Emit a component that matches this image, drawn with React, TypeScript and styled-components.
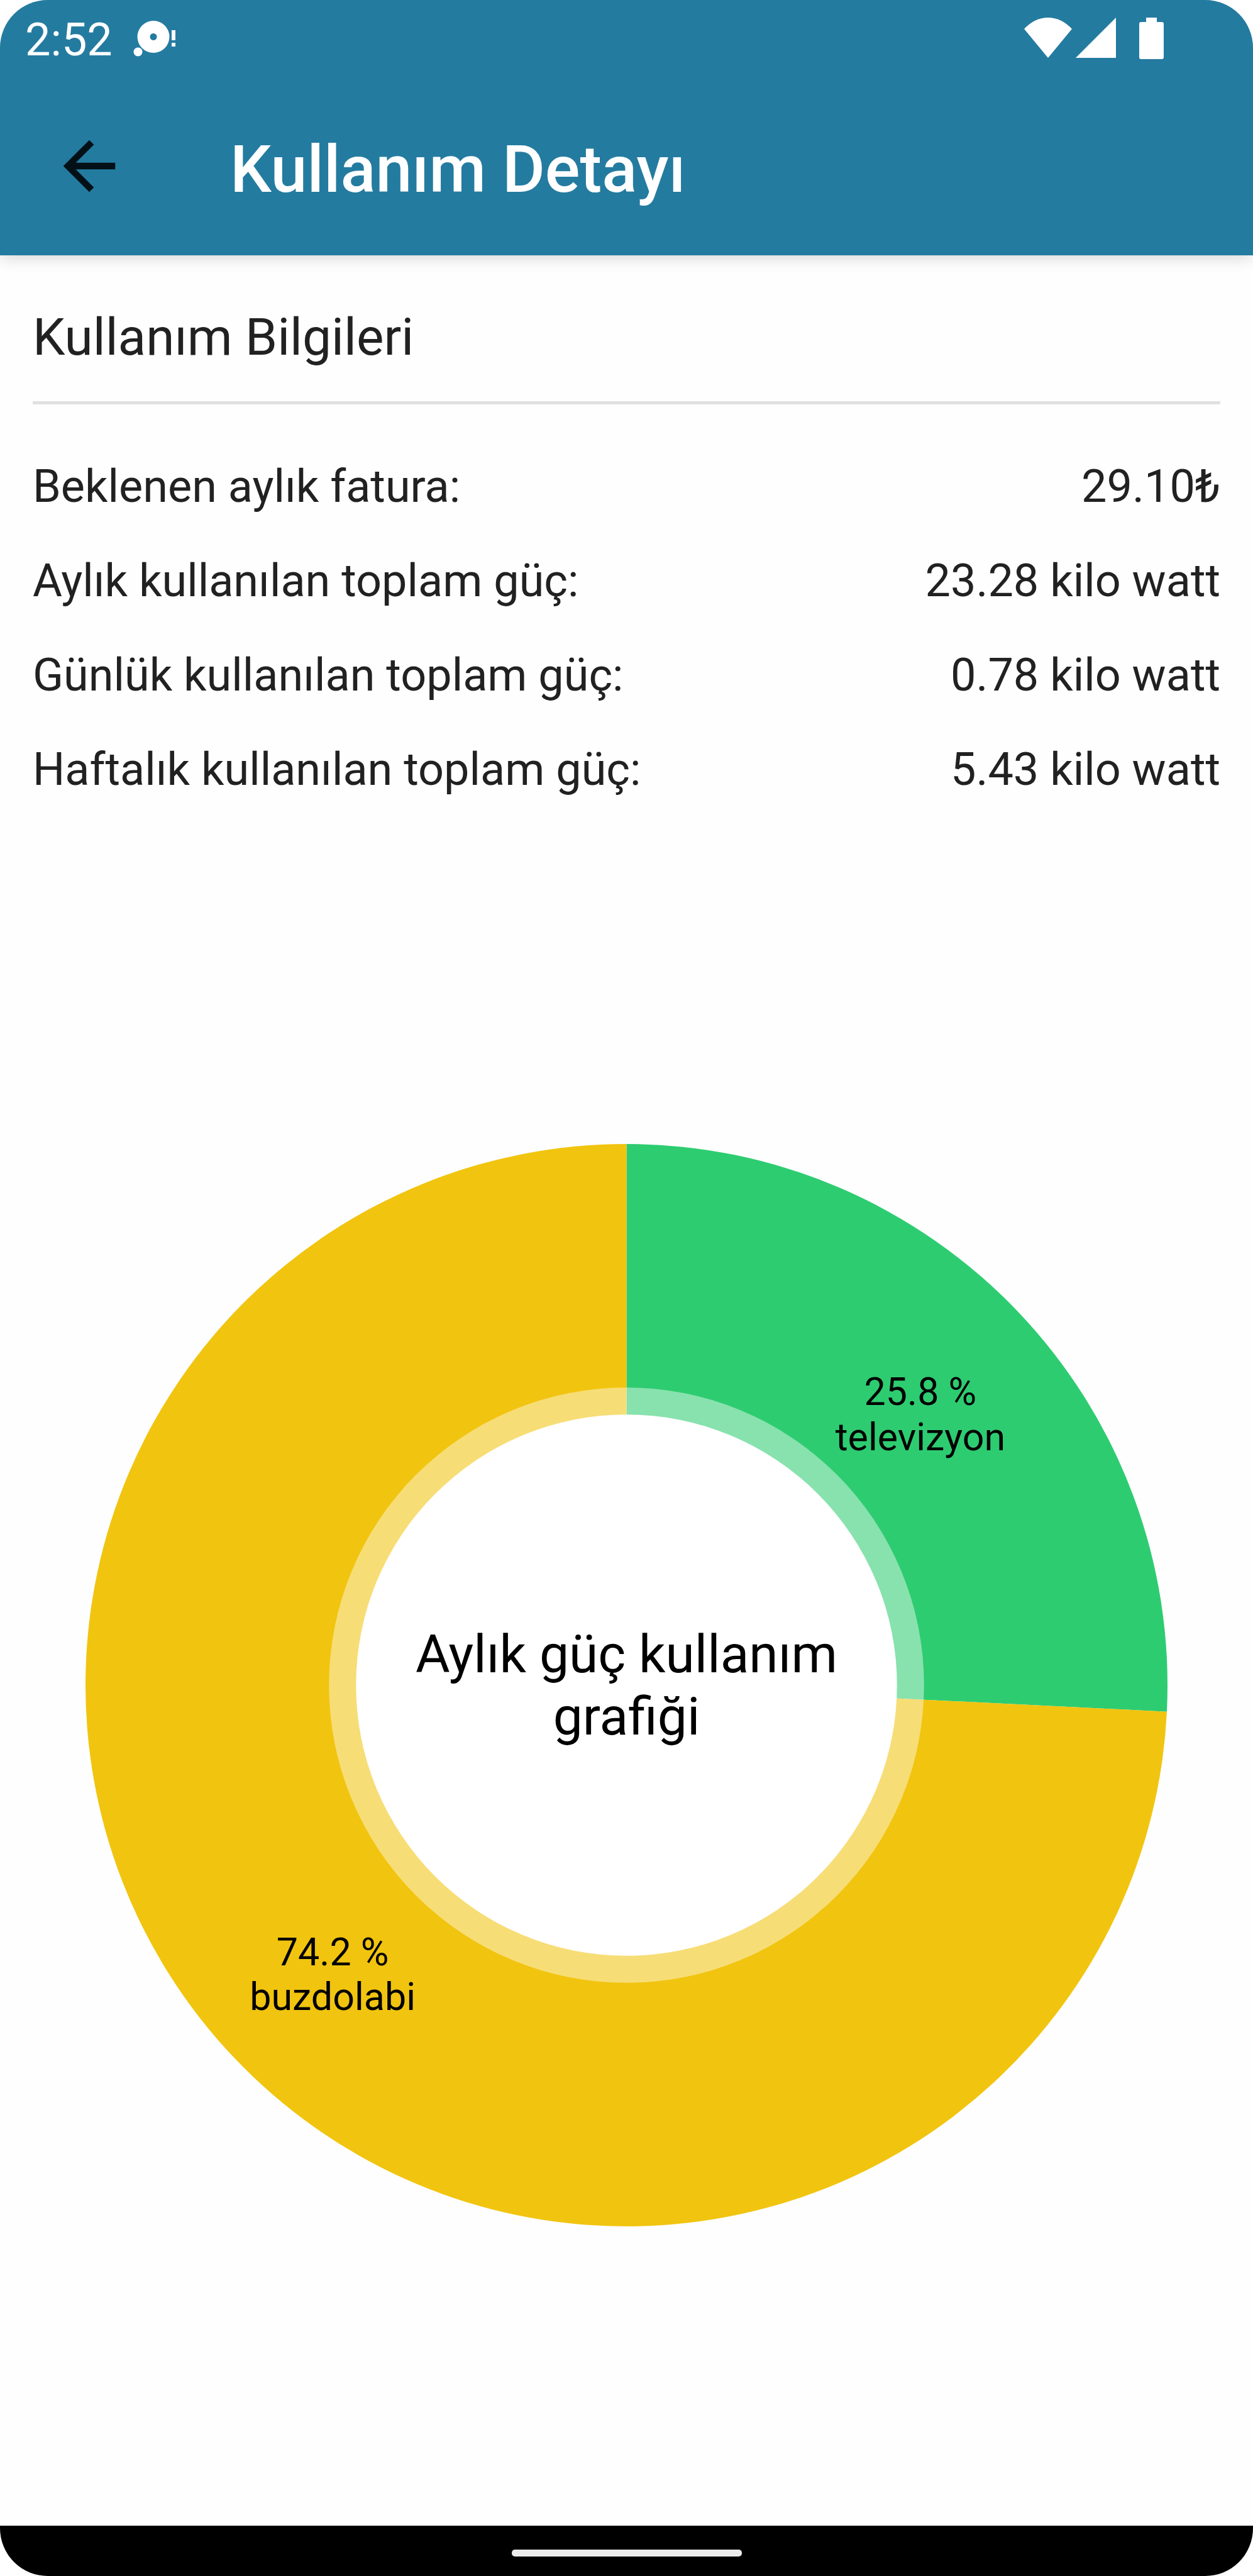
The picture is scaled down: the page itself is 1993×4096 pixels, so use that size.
import React from 'react';
import styled, { createGlobalStyle } from 'styled-components';

const GlobalStyle = createGlobalStyle`
  *, *::before, *::after { box-sizing: border-box; }
  body { margin: 0; background: #ffffff; }
`;

const Screen = styled.div`
  display: flex;
  flex-direction: column;
  min-height: 100vh;
  overflow: hidden;
  border-radius: 76px;
  background: #fefefe;
  color: #212121;
  font-family: Roboto, "Noto Sans", sans-serif;
`;

const TopArea = styled.header`
  background: #247ba0;
  color: #ffffff;
  box-shadow: 0 4px 24px rgba(0, 0, 0, 0.16);
`;

const StatusBar = styled.div`
  display: flex;
  align-items: center;
  justify-content: space-between;
  height: 128px;
  padding: 0 140px 0 40px;
`;

const StatusGroup = styled.div`
  display: flex;
  align-items: center;
`;

const Clock = styled.time`
  font-size: 72px;
  line-height: 84px;
`;

const NoticeIcon = styled.svg`
  display: block;
  width: 72px;
  height: 64px;
  margin-left: 32px;
`;

const SystemIcons = styled.svg`
  display: block;
  width: 224px;
  height: 72px;
`;

const Toolbar = styled.div`
  display: flex;
  align-items: center;
  height: 278px;
  padding: 0 80px 6px;
`;

const BackButton = styled.button`
  display: block;
  width: 124px;
  height: 124px;
  padding: 0;
  border: 0;
  background: none;
  color: #031017;
  cursor: pointer;

  svg {
    display: block;
    width: 100%;
    height: 100%;
  }
`;

const Title = styled.h1`
  margin: 0 0 0 162px;
  padding-top: 12px;
  font-size: 104px;
  font-weight: 500;
  line-height: 120px;
`;

const Content = styled.main`
  display: flex;
  flex: 1;
  flex-direction: column;
  padding: 0 52px;
`;

const SectionTitle = styled.h2`
  margin: 0;
  padding: 82px 0 54px;
  border-bottom: 5px solid #e0e0e0;
  font-size: 82px;
  font-weight: 400;
  line-height: 96px;
`;

const UsageTable = styled.table`
  width: 100%;
  margin-top: 56px;
  border-collapse: collapse;
  font-size: 72px;
  line-height: 90px;
`;

const UsageLabel = styled.th`
  height: 150px;
  padding: 0;
  font-weight: 400;
  text-align: left;
`;

const UsageValue = styled.td`
  height: 150px;
  padding: 0;
  text-align: right;
`;

const ChartArea = styled.figure`
  display: flex;
  flex: 1;
  align-items: center;
  justify-content: center;
  margin: 44px 84px 0;
`;

const Chart = styled.svg`
  display: block;
  width: 100%;
  height: auto;
  fill: #000000;
`;

const NavigationBar = styled.footer`
  display: flex;
  align-items: center;
  justify-content: center;
  height: 80px;
  padding-top: 7px;
  background: #000000;
`;

const HomeHandle = styled.div`
  width: 366px;
  height: 11px;
  border-radius: 5px;
  background: #ebebeb;
`;

const usage = [
  { label: 'Beklenen aylık fatura:', value: '29.10₺' },
  { label: 'Aylık kullanılan toplam güç:', value: '23.28 kilo watt' },
  { label: 'Günlük kullanılan toplam güç:', value: '0.78 kilo watt' },
  { label: 'Haftalık kullanılan toplam güç:', value: '5.43 kilo watt' },
];

const slices = [
  { name: 'televizyon', share: 25.78, text: '25.8 %', color: '#2ecc71' },
  { name: 'buzdolabi', share: 74.22, text: '74.2 %', color: '#f1c40f' },
];

const SIZE = 1722;
const R = SIZE / 2;
const HOLE = R * 0.5;
const HALO = R * 0.55;
const LABEL_RADIUS = R * 0.75;

function point(percent: number, radius: number) {
  const angle = (percent / 100) * Math.PI * 2;
  return { x: R + Math.sin(angle) * radius, y: R - Math.cos(angle) * radius };
}

function slicePath(from: number, share: number) {
  const a = point(from, R);
  const b = point(from + share, R);
  return `M${R} ${R}L${a.x} ${a.y}A${R} ${R} 0 ${share > 50 ? 1 : 0} 1 ${b.x} ${b.y}Z`;
}

function UsageChart() {
  let start = 0;
  const parts = slices.map((slice) => {
    const part = {
      ...slice,
      path: slicePath(start, slice.share),
      label: point(start + slice.share / 2, LABEL_RADIUS),
    };
    start += slice.share;
    return part;
  });

  return (
    <Chart viewBox={`0 0 ${SIZE} ${SIZE}`} role="img" aria-label="Aylık güç kullanım grafiği">
      {parts.map((part) => (
        <path key={part.name} d={part.path} fill={part.color} />
      ))}
      <circle cx={R} cy={R} r={HALO} fill="#ffffff" fillOpacity={0.43} />
      <circle cx={R} cy={R} r={HOLE} fill="#ffffff" />
      {parts.map((part) => (
        <text key={part.name} fontSize="61" textAnchor="middle">
          <tspan x={part.label.x} y={part.label.y}>{part.text}</tspan>
          <tspan x={part.label.x} dy="72">{part.name}</tspan>
        </text>
      ))}
      <text fontSize="84" textAnchor="middle">
        <tspan x={R} y={R - 20}>Aylık güç kullanım</tspan>
        <tspan x={R} dy="99">grafiği</tspan>
      </text>
    </Chart>
  );
}

export default function App() {
  return (
    <>
      <GlobalStyle />
      <Screen>
        <TopArea>
          <StatusBar>
            <StatusGroup>
              <Clock>2:52</Clock>
              <NoticeIcon viewBox="0 3 72 64" fill="currentColor" aria-hidden="true">
                <path fillRule="evenodd" d="M33 4a25.5 25.5 0 1 1 0 51a25.5 25.5 0 1 1 0-51zM33 24a5.5 5.5 0 1 0 0 11a5.5 5.5 0 1 0 0-11z" />
                <circle cx="8.500" cy="53.500" r="7" />
                <path d="M62 19h6v16h-6zM62 39h6v6h-6z" />
              </NoticeIcon>
            </StatusGroup>
            <SystemIcons viewBox="0 4 224 72" fill="currentColor" aria-hidden="true">
              <path d="M0 22Q17 4 38 4T76 22L38 68Z" />
              <path d="M146 4V68H82Z" />
              <path d="M194 4h17v7h8q3 0 3 3v53q0 3-3 3h-33q-3 0-3-3V14q0-3 3-3h8z" />
            </SystemIcons>
          </StatusBar>
          <Toolbar>
            <BackButton type="button" aria-label="Geri">
              <svg viewBox="0 0 24 24" fill="currentColor" aria-hidden="true">
                <path d="M20 11H7.83l5.59-5.59L12 4l-8 8 8 8 1.41-1.41L7.83 13H20v-2z" />
              </svg>
            </BackButton>
            <Title>Kullanım Detayı</Title>
          </Toolbar>
        </TopArea>
        <Content>
          <SectionTitle>Kullanım Bilgileri</SectionTitle>
          <UsageTable>
            <tbody>
              {usage.map((row) => (
                <tr key={row.label}>
                  <UsageLabel scope="row">{row.label}</UsageLabel>
                  <UsageValue>{row.value}</UsageValue>
                </tr>
              ))}
            </tbody>
          </UsageTable>
          <ChartArea>
            <UsageChart />
          </ChartArea>
        </Content>
        <NavigationBar>
          <HomeHandle />
        </NavigationBar>
      </Screen>
    </>
  );
}
